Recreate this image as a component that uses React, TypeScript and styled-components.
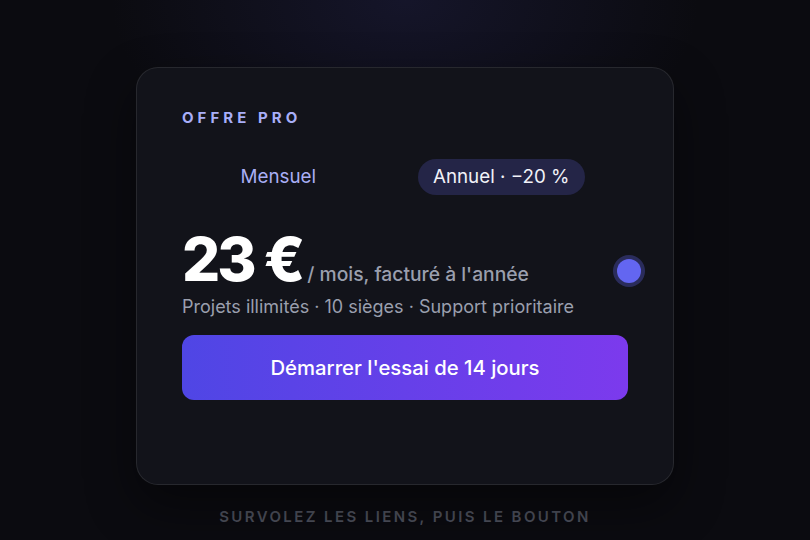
import React from "react";
import styled, { createGlobalStyle } from "styled-components";

const Global = createGlobalStyle`
  html, body {
    margin: 0;
    padding: 0;
    background: #0b0b10;
  }
  body {
    font-family: Inter, "Noto Sans", "Liberation Sans", sans-serif;
    -webkit-font-smoothing: antialiased;
  }
`;

const Page = styled.main`
  min-height: 540px;
  box-sizing: border-box;
  padding-top: 67px;
  display: flex;
  flex-direction: column;
  align-items: center;
  background:
    radial-gradient(ellipse 420px 260px at 50% 0%, rgba(40, 40, 90, 0.35), rgba(40, 40, 90, 0) 70%),
    #0b0b10;
`;

const Card = styled.section`
  position: relative;
  box-sizing: border-box;
  width: 538px;
  height: 418px;
  padding: 40px 45px;
  border-radius: 22px;
  border: 1px solid rgba(255, 255, 255, 0.09);
  background: #12131a;
  box-shadow: 0 20px 50px rgba(0, 0, 0, 0.45);
  display: flex;
  flex-direction: column;
`;

const Eyebrow = styled.h2`
  margin: 0;
  font-size: 15px;
  line-height: 20px;
  font-weight: 700;
  letter-spacing: 0.27em;
  color: #a8aef8;
`;

const Toggle = styled.div`
  margin-top: 31px;
  display: flex;
  justify-content: space-around;
  align-items: center;
`;

const Option = styled.button<{ $active?: boolean }>`
  appearance: none;
  border: none;
  cursor: pointer;
  font-family: inherit;
  font-size: 18.8px;
  font-weight: 400;
  line-height: 36px;
  height: 36px;
  padding: 0 15px;
  border-radius: 18px;
  color: ${(p) => (p.$active ? "#f1f2f8" : "#a9aef5")};
  background: ${(p) => (p.$active ? "#242547" : "transparent")};
`;

const PriceRow = styled.div`
  margin-top: 34px;
  display: flex;
  align-items: baseline;
  gap: 5px;
`;

const Amount = styled.span`
  font-size: 60px;
  line-height: 60px;
  font-weight: 800;
  letter-spacing: -0.05em;
  color: #ffffff;
`;

const Period = styled.span`
  font-size: 19.3px;
  font-weight: 500;
  color: #9a9fae;
`;

const Features = styled.p`
  margin: 6px 0 0;
  font-size: 18px;
  line-height: 24px;
  color: #9a9fae;
`;

const Cta = styled.button`
  margin-top: 16px;
  appearance: none;
  border: none;
  cursor: pointer;
  height: 65px;
  border-radius: 12px;
  font-family: inherit;
  font-size: 20.3px;
  font-weight: 500;
  color: #ffffff;
  background: linear-gradient(90deg, #4f46e5 0%, #7c3aed 100%);
`;

const CursorDot = styled.span`
  position: absolute;
  left: 480px;
  top: 191px;
  width: 24px;
  height: 24px;
  border-radius: 50%;
  background: #6366f1;
  box-shadow: 0 0 0 4px rgba(99, 102, 241, 0.3);
  pointer-events: none;
`;

const Hint = styled.p`
  margin: 22px 0 0;
  font-size: 15px;
  font-weight: 600;
  letter-spacing: 0.16em;
  color: #4d505c;
`;

export default function App() {
  return (
    <>
      <Global />
      <Page>
        <Card>
          <Eyebrow>OFFRE PRO</Eyebrow>
          <Toggle>
            <Option>Mensuel</Option>
            <Option $active>Annuel · −20 %</Option>
          </Toggle>
          <PriceRow>
            <Amount>23 €</Amount>
            <Period>/ mois, facturé à l'année</Period>
          </PriceRow>
          <Features>Projets illimités · 10 sièges · Support prioritaire</Features>
          <Cta>Démarrer l'essai de 14 jours</Cta>
          <CursorDot />
        </Card>
        <Hint>SURVOLEZ LES LIENS, PUIS LE BOUTON</Hint>
      </Page>
    </>
  );
}
